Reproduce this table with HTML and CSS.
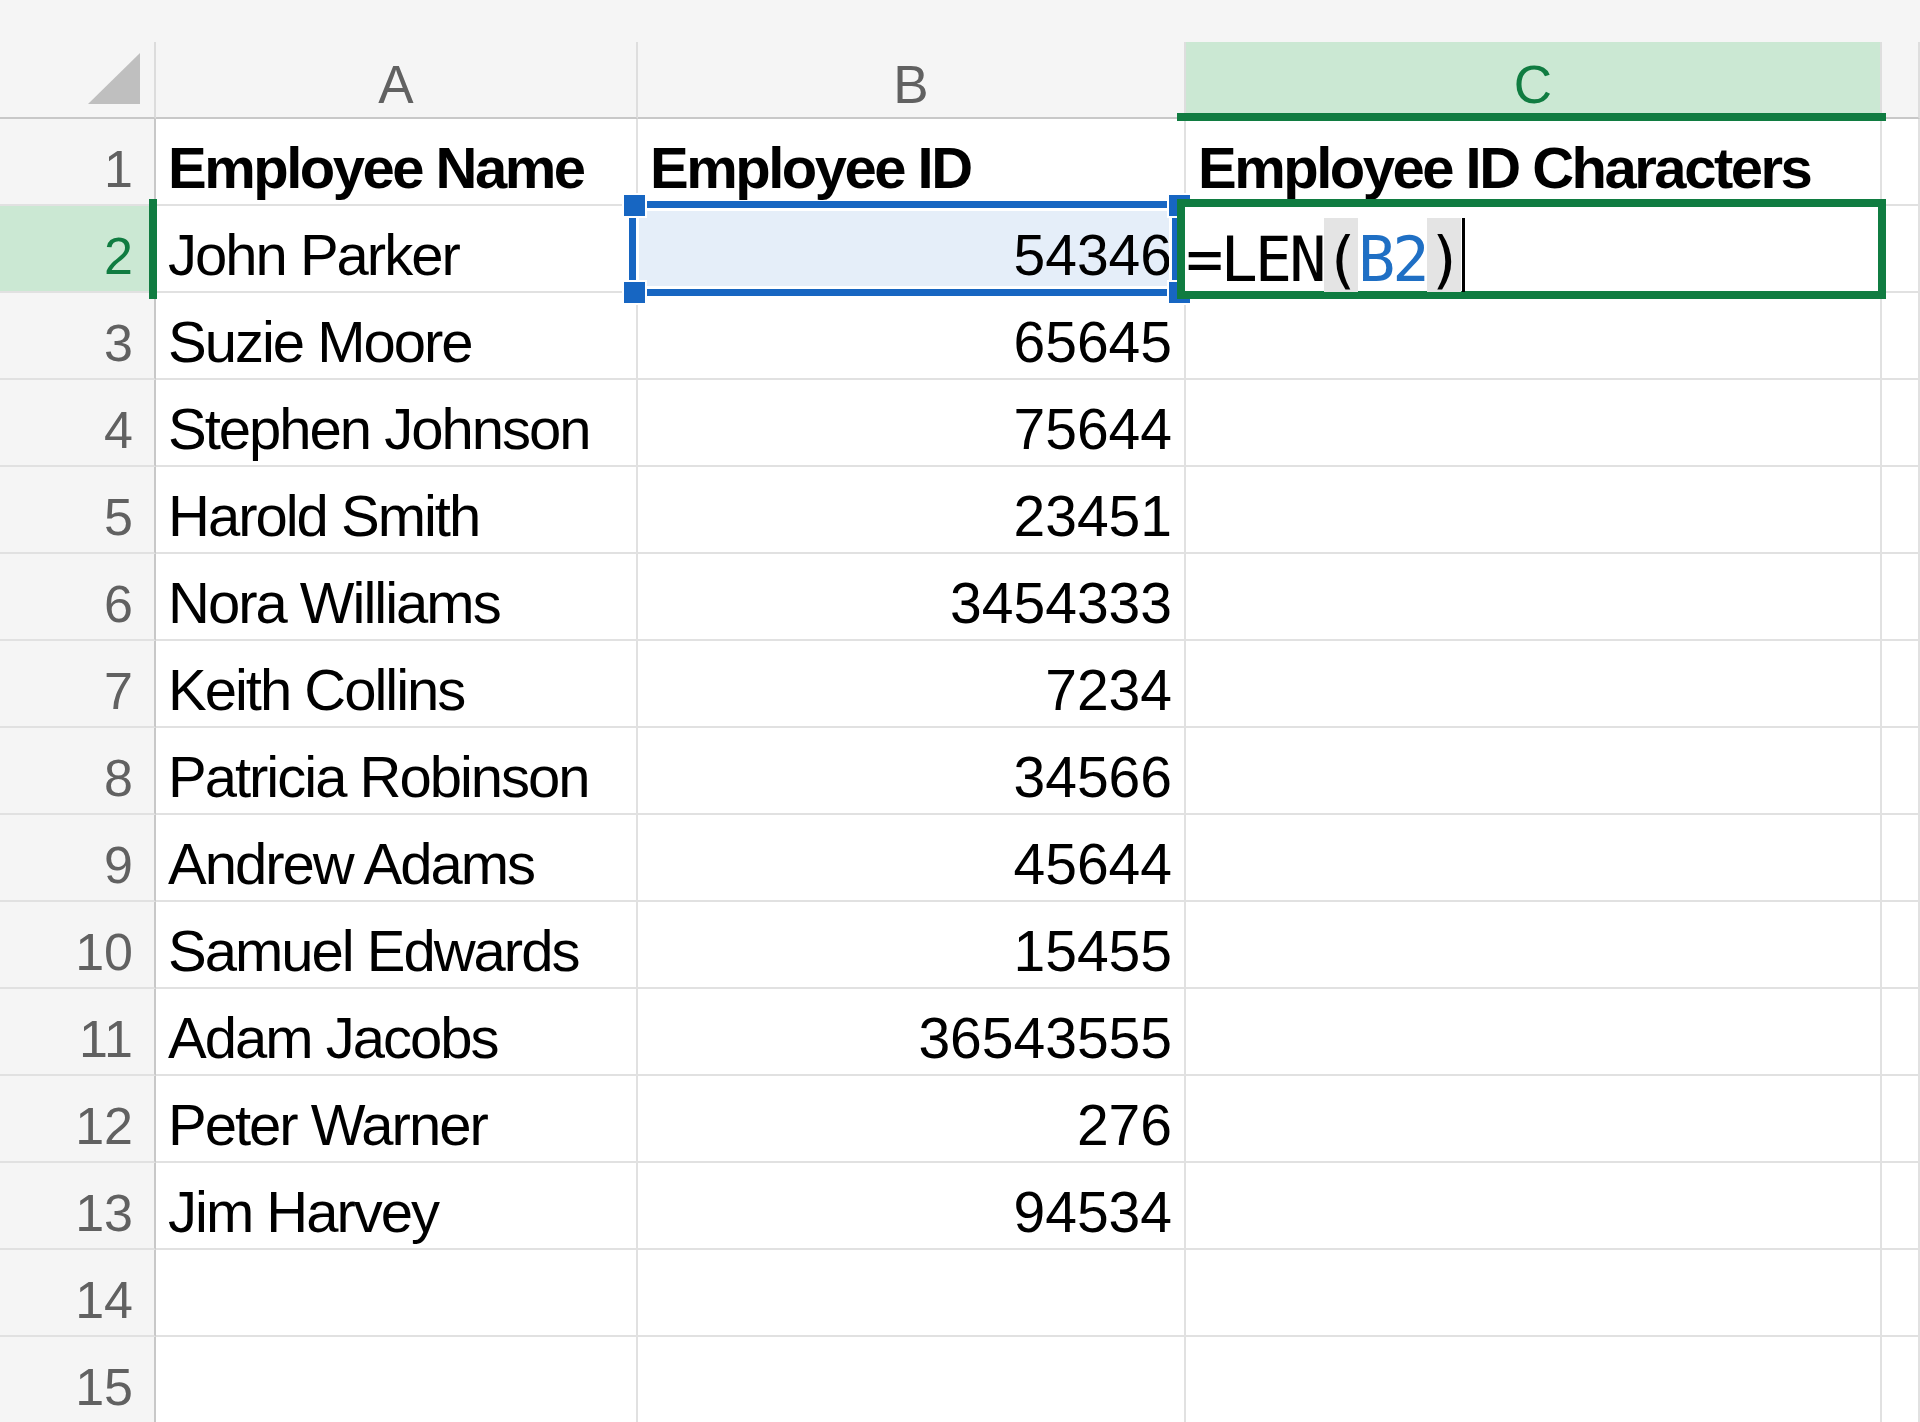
FILE: index.html
```html
<!DOCTYPE html>
<html lang="en">
<head>
<meta charset="utf-8">
<title>Employee ID Characters</title>
<link rel="stylesheet" href="styles.css">
</head>
<body>
<div class="sheet">
  <div class="topstrip"></div>
  <div class="grid">
    <div class="corner"><svg class="corner-tri" width="52" height="51" viewBox="0 0 52 51"><polygon points="52,0 52,51 0,51" fill="#bfbfbf"/></svg></div>
    <div class="colhead">A</div>
    <div class="colhead">B</div>
    <div class="colhead colhead-active">C</div>
    <div class="colhead"></div>

    <div class="rowhead">1</div>
    <div class="cell txt bold">Employee Name</div>
    <div class="cell txt bold">Employee ID</div>
    <div class="cell txt bold">Employee ID Characters</div>
    <div class="cell"></div>

    <div class="rowhead rowhead-active">2</div>
    <div class="cell txt">John Parker</div>
    <div class="cell num cell-ref">54346</div>
    <div class="cell"></div>
    <div class="cell"></div>

    <div class="rowhead">3</div>
    <div class="cell txt">Suzie Moore</div>
    <div class="cell num">65645</div>
    <div class="cell"></div>
    <div class="cell"></div>

    <div class="rowhead">4</div>
    <div class="cell txt">Stephen Johnson</div>
    <div class="cell num">75644</div>
    <div class="cell"></div>
    <div class="cell"></div>

    <div class="rowhead">5</div>
    <div class="cell txt">Harold Smith</div>
    <div class="cell num">23451</div>
    <div class="cell"></div>
    <div class="cell"></div>

    <div class="rowhead">6</div>
    <div class="cell txt">Nora Williams</div>
    <div class="cell num">3454333</div>
    <div class="cell"></div>
    <div class="cell"></div>

    <div class="rowhead">7</div>
    <div class="cell txt">Keith Collins</div>
    <div class="cell num">7234</div>
    <div class="cell"></div>
    <div class="cell"></div>

    <div class="rowhead">8</div>
    <div class="cell txt">Patricia Robinson</div>
    <div class="cell num">34566</div>
    <div class="cell"></div>
    <div class="cell"></div>

    <div class="rowhead">9</div>
    <div class="cell txt">Andrew Adams</div>
    <div class="cell num">45644</div>
    <div class="cell"></div>
    <div class="cell"></div>

    <div class="rowhead">10</div>
    <div class="cell txt">Samuel Edwards</div>
    <div class="cell num">15455</div>
    <div class="cell"></div>
    <div class="cell"></div>

    <div class="rowhead">11</div>
    <div class="cell txt">Adam Jacobs</div>
    <div class="cell num">36543555</div>
    <div class="cell"></div>
    <div class="cell"></div>

    <div class="rowhead">12</div>
    <div class="cell txt">Peter Warner</div>
    <div class="cell num">276</div>
    <div class="cell"></div>
    <div class="cell"></div>

    <div class="rowhead">13</div>
    <div class="cell txt">Jim Harvey</div>
    <div class="cell num">94534</div>
    <div class="cell"></div>
    <div class="cell"></div>

    <div class="rowhead">14</div>
    <div class="cell"></div>
    <div class="cell"></div>
    <div class="cell"></div>
    <div class="cell"></div>

    <div class="rowhead">15</div>
    <div class="cell"></div>
    <div class="cell"></div>
    <div class="cell"></div>
    <div class="cell"></div>
  </div>

  <!-- overlays: selection highlights drawn over the grid -->
  <div class="col-indicator"></div>
  <div class="row-indicator"></div>
  <div class="ref-box"></div>
  <div class="handle handle-tl"></div>
  <div class="handle handle-bl"></div>
  <div class="handle handle-tr"></div>
  <div class="handle handle-br"></div>
  <div class="active-cell">
    <div class="formula">
      <span class="ch">=</span><span class="ch">L</span><span class="ch">E</span><span class="ch">N</span><span class="ch paren">(</span><span class="ch ref">B</span><span class="ch ref">2</span><span class="ch paren">)</span><span class="caret"></span>
    </div>
  </div>
</div>
</body>
</html>
```

FILE: styles.css
```css
* {
  box-sizing: border-box;
}

html, body {
  margin: 0;
  padding: 0;
  background: #f5f5f5;
  overflow: hidden;
}

.sheet {
  position: relative;
  width: 1920px;
  height: 1422px;
  overflow: hidden;
  font-family: "Liberation Sans", Arial, sans-serif;
}

.topstrip {
  height: 42px;
  background: #f5f5f5;
}

.grid {
  display: grid;
  grid-template-columns: 156px 482px 548px 696px 1fr;
  grid-template-rows: 77px repeat(15, 87px);
  background: #ffffff;
}

.corner {
  background: #f5f5f5;
  border-right: 2px solid #dcdcdc;
  border-bottom: 2px solid #c8c8c8;
  display: flex;
  justify-content: flex-end;
  align-items: flex-end;
  padding: 0 14px 13px 0;
}

.corner-tri {
  display: block;
}

.colhead {
  background: #f5f5f5;
  border-right: 2px solid #dedede;
  border-bottom: 2px solid #c8c8c8;
  text-align: center;
  font-size: 53px;
  line-height: 60px;
  padding-top: 13px;
  color: #616161;
}

.colhead-active {
  background: #cbe8d3;
  color: #107c41;
}

.rowhead {
  background: #f5f5f5;
  border-right: 2px solid #c8c8c8;
  border-bottom: 2px solid #e1e1e1;
  text-align: right;
  font-size: 52px;
  line-height: 68px;
  padding: 16px 21px 0 0;
  color: #616161;
}

.rowhead-active {
  background: #cbe8d3;
  color: #107c41;
}

.cell {
  background: #ffffff;
  border-right: 2px solid #e1e1e1;
  border-bottom: 2px solid #e1e1e1;
  color: #000000;
  white-space: nowrap;
}

.txt {
  font-size: 58px;
  letter-spacing: -2px;
  line-height: 68px;
  padding: 15px 0 0 12px;
}

.bold {
  font-weight: bold;
  letter-spacing: -2.5px;
}

.num {
  font-size: 57px;
  line-height: 68px;
  padding: 15px 12px 0 0;
  text-align: right;
}

.cell-ref {
  background: #e5eef9;
}

/* overlays */
.col-indicator {
  position: absolute;
  left: 1177px;
  top: 113px;
  width: 709px;
  height: 8px;
  background: #107c41;
}

.row-indicator {
  position: absolute;
  left: 149px;
  top: 199px;
  width: 8px;
  height: 100px;
  background: #107c41;
}

.ref-box {
  position: absolute;
  left: 629px;
  top: 201px;
  width: 550px;
  height: 95px;
  border: 7px solid #1766c2;
  box-shadow: inset 0 0 0 3px #ffffff;
}

.handle {
  position: absolute;
  width: 25px;
  height: 25px;
  background: #1766c2;
  border: 2px solid #ffffff;
}

.handle-tl { left: 622px; top: 193px; }
.handle-bl { left: 622px; top: 280px; }
.handle-tr { left: 1167px; top: 193px; }
.handle-br { left: 1167px; top: 280px; }

.active-cell {
  position: absolute;
  left: 1177px;
  top: 199px;
  width: 709px;
  height: 100px;
  border: 8px solid #107c41;
  background: #ffffff;
  padding: 11px 0 0 1px;
}

.formula {
  display: flex;
  align-items: flex-start;
  font-family: "DejaVu Sans Mono", "Liberation Mono", monospace;
  font-size: 62px;
  color: #000000;
}

.ch {
  display: block;
  width: 34.4px;
  height: 74px;
  padding-top: 11px;
  line-height: 61px;
  white-space: nowrap;
  letter-spacing: -3px;
}

.paren {
  background: #e4e4e4;
}

.ref {
  color: #1f6fc4;
}

.caret {
  display: block;
  width: 3px;
  height: 74px;
  margin-left: 1px;
  background: #000000;
}
```
